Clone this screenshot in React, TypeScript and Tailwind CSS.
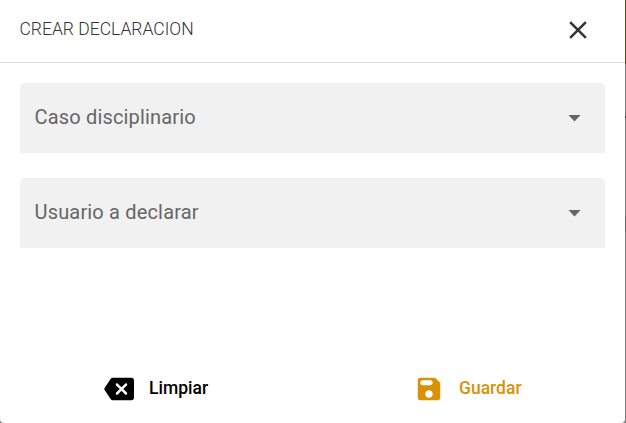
import type { ReactNode } from "react";

function Icon({ d, className }: { d: string; className: string }) {
  return (
    <svg viewBox="0 0 24 24" fill="currentColor" aria-hidden="true" className={`size-[30px] shrink-0 ${className}`}>
      <path d={d} />
    </svg>
  );
}

function SelectField({ label }: { label: string }) {
  return (
    <button
      type="button"
      className="flex h-[70px] w-full items-center justify-between rounded-t-[5px] bg-[#f1f1f1] pr-[24px] pl-[14.5px] text-left text-[#666666]"
    >
      <span className="-mt-0.5 text-[20px] leading-6 tracking-[0.17px]">{label}</span>
      <svg viewBox="0 0 13 7" fill="currentColor" className="mt-px h-[6.5px] w-[13px]" aria-hidden="true">
        <path d="M0 0h13L6.500 7z" />
      </svg>
    </button>
  );
}

function Action({ icon, label, className }: { icon: ReactNode; label: string; className: string }) {
  return (
    <button type="button" className={`flex h-[30px] items-center gap-[15px] text-[17.5px] leading-6 font-medium ${className}`}>
      {icon}
      <span>{label}</span>
    </button>
  );
}

export default function App() {
  return (
    <div className="flex h-[423px] w-[626px] overflow-hidden bg-[#777777] font-[Roboto,sans-serif]">
      <main className="flex w-[625px] flex-col rounded-b-[4px] bg-white">
        <header className="flex h-[63px] items-center justify-between border-b border-[#dddddd] pr-8 pl-[19.5px]">
          <h1 className="-mt-1 text-[17.5px] leading-6 font-light text-[#333333]">CREAR DECLARACION</h1>
          <button type="button" aria-label="Cerrar" className="-mt-0.5 text-[#333333]">
            <Icon
              className="block"
              d="M19 6.410 17.590 5 12 10.590 6.410 5 5 6.410 10.590 12 5 17.590 6.410 19 12 13.410 17.590 19 19 17.590 13.410 12z"
            />
          </button>
        </header>
        <section className="flex flex-col gap-[25px] px-5 pt-5">
          <SelectField label="Caso disciplinario" />
          <SelectField label="Usuario a declarar" />
        </section>
        <footer className="mt-auto mb-5 grid grid-cols-2">
          <Action
            className="justify-self-start pl-[104px] text-black"
            label="Limpiar"
            icon={
              <Icon
                className="mt-px"
                d="M22 3H7c-.69 0-1.230.350-1.590.880L.370 11.450c-.220.340-.220.770 0 1.110l5.040 7.560c.360.520.900.880 1.590.880h15c1.100 0 2-.900 2-2V5c0-1.100-.900-2-2-2zm-3.700 13.300c-.390.390-1.020.390-1.410 0L14 13.410l-2.890 2.890c-.390.390-1.020.390-1.410 0-.390-.390-.390-1.020 0-1.410L12.590 12 9.700 9.110c-.390-.390-.390-1.020 0-1.410.390-.390 1.020-.390 1.410 0L14 10.590l2.890-2.890c.390-.390 1.020-.390 1.410 0 .390.390.390 1.020 0 1.410L15.410 12l2.890 2.890c.380.380.380 1.020 0 1.410z"
              />
            }
          />
          <Action
            className="justify-self-start pl-[101.5px] text-[#d79207]"
            label="Guardar"
            icon={
              <Icon
                className="mt-px"
                d="M17.590 3.590c-.380-.380-.890-.590-1.420-.590H5c-1.110 0-2 .900-2 2v14c0 1.100.900 2 2 2h14c1.100 0 2-.900 2-2V7.830c0-.530-.210-1.040-.590-1.410l-2.820-2.830zM12 19c-1.660 0-3-1.340-3-3s1.340-3 3-3 3 1.340 3 3-1.340 3-3 3zm1-10H7c-1.100 0-2-.900-2-2s.900-2 2-2h6c1.100 0 2 .900 2 2s-.900 2-2 2z"
              />
            }
          />
        </footer>
      </main>
      <aside className="flex w-px flex-col bg-[#7d7d7d]">
        <div className="h-16 bg-[#5c4518]" />
        <div className="mt-[52px] h-[2px] bg-[#333333]" />
        <div className="mt-[98px] h-4 bg-[#606060]" />
      </aside>
    </div>
  );
}
